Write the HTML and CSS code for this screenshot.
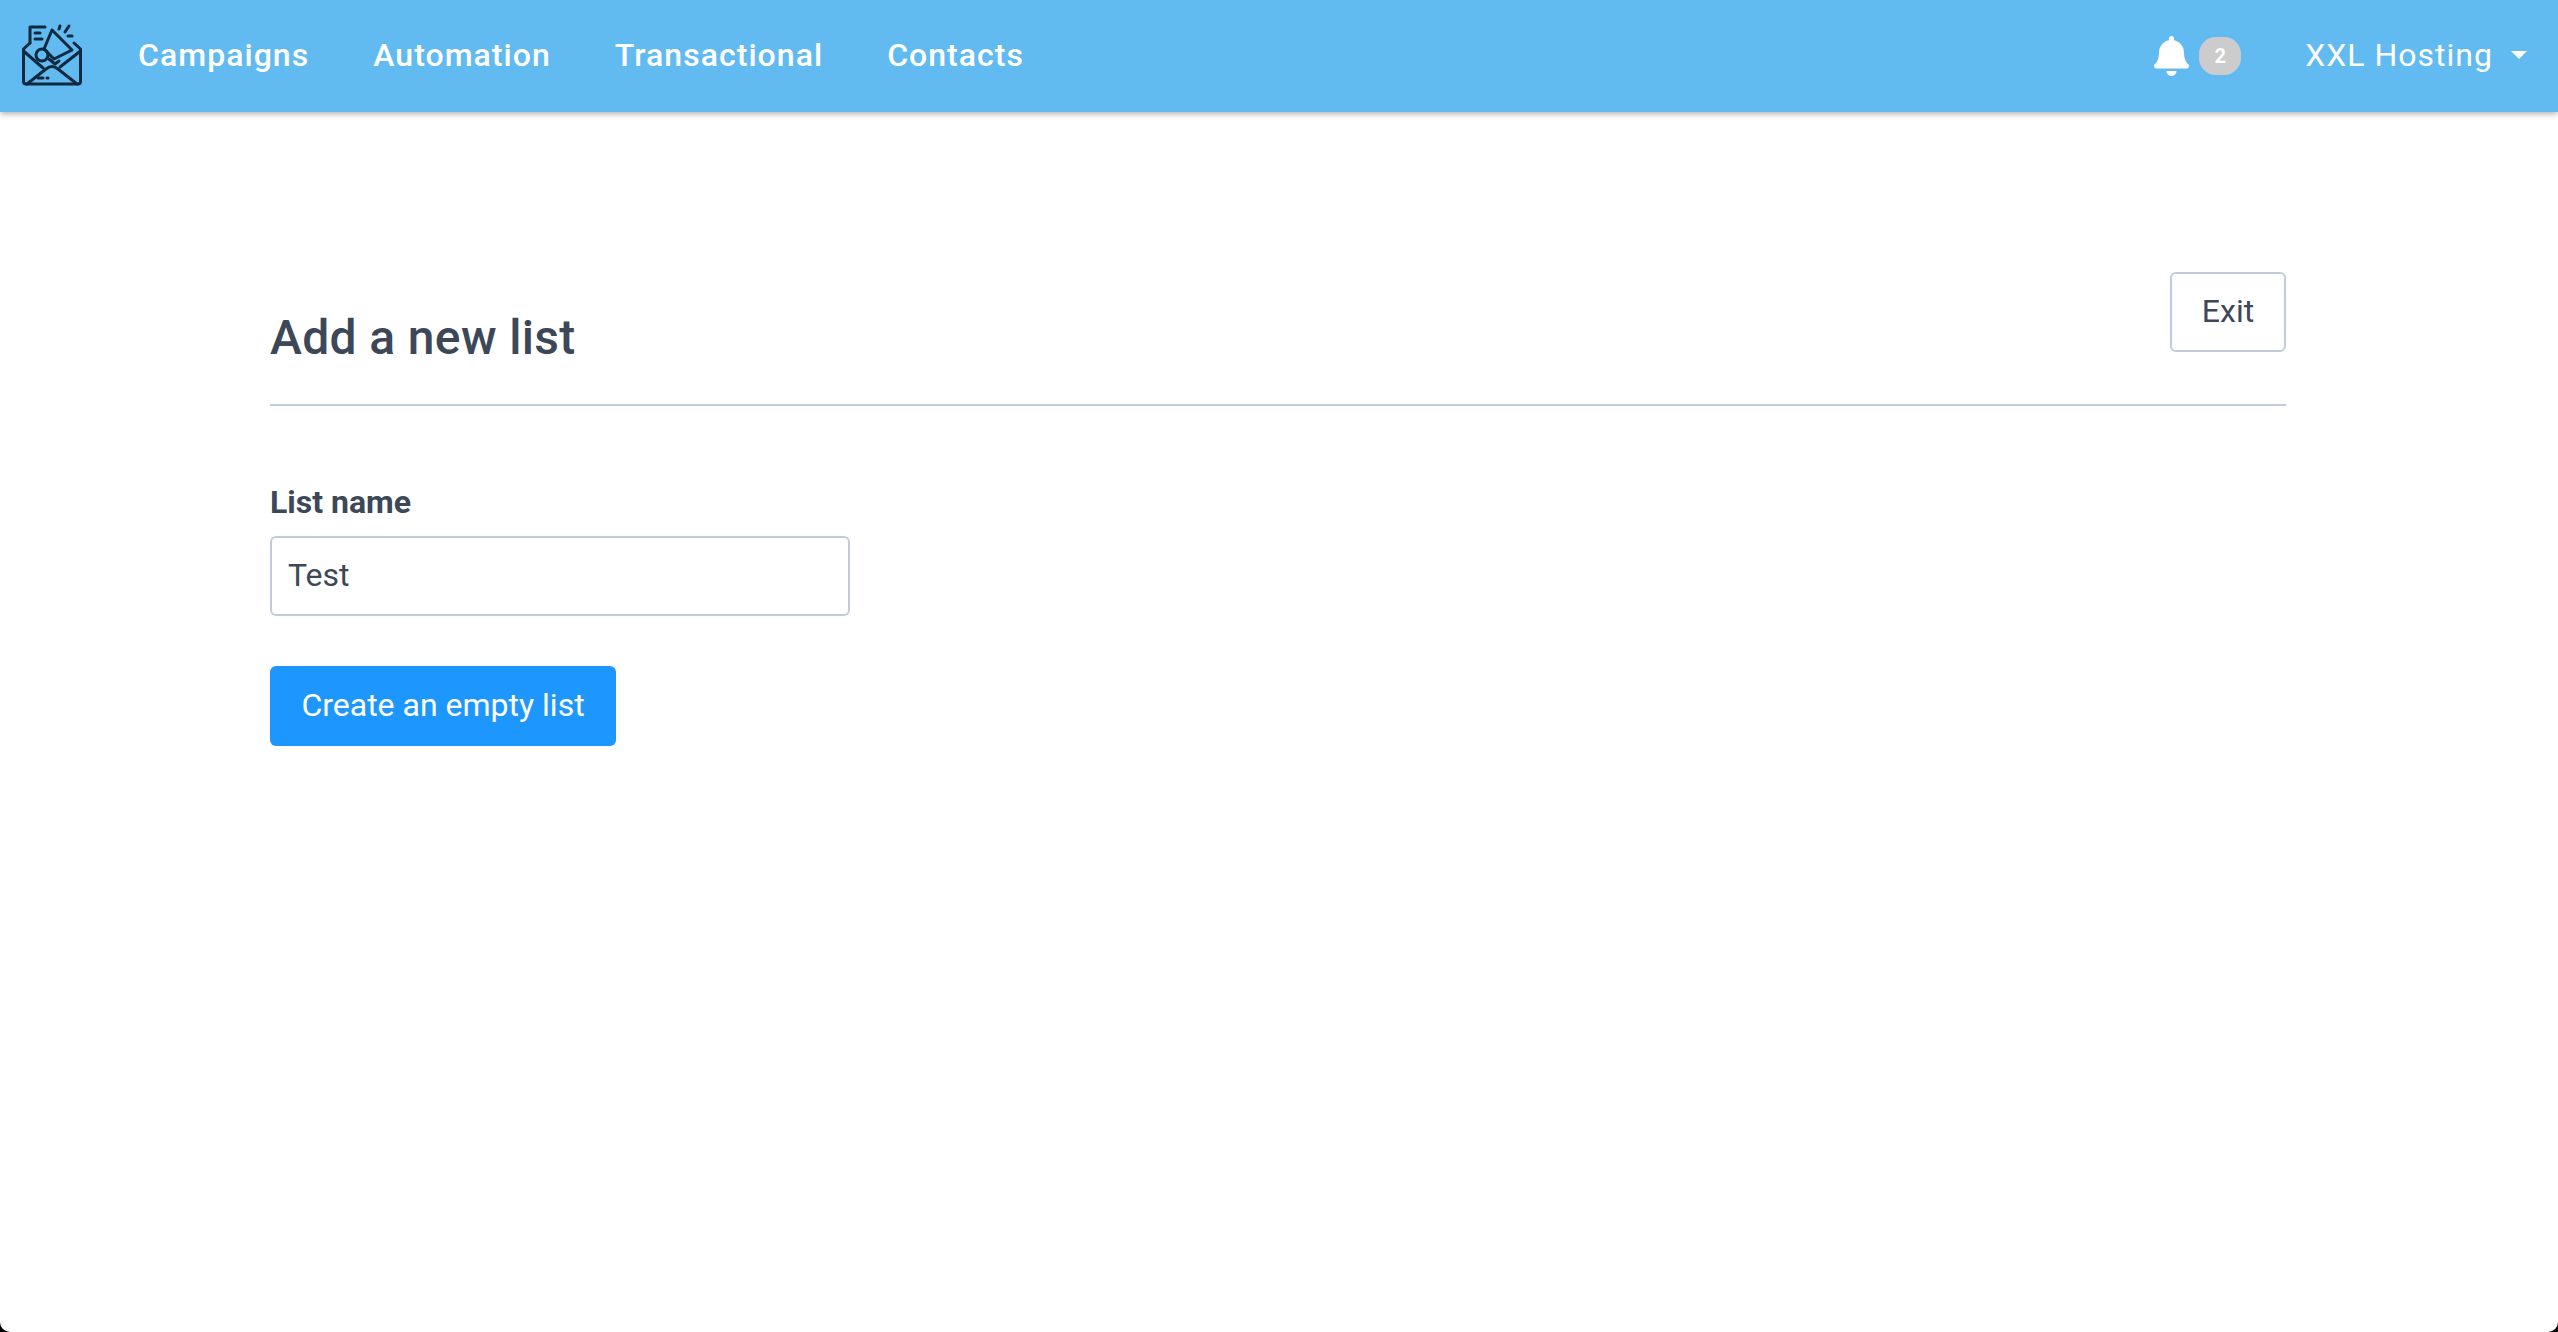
FILE: index.html
```html
<!DOCTYPE html>
<html lang="en">
<head>
<meta charset="utf-8">
<title>Add a new list</title>
<link rel="stylesheet" href="styles.css">
</head>
<body>
<div class="page">
  <nav class="topbar">
    <a class="logo" href="#" aria-label="Home">
      <svg width="60" height="60" viewBox="0 0 60 60" fill="none" stroke="#0f2a40" stroke-width="3" stroke-linejoin="round" stroke-linecap="round">
        <path d="M8 17V1H23"/>
        <path d="M13 7H18M13 13H20"/>
        <path d="M8 17L1.500 23V55.500Q1.500 58 4 58H56Q58.500 58 58.500 55.500V23L52 17"/>
        <path d="M1.500 25L21 42M58.500 25L38 41"/>
        <path d="M5 58L24 43Q30 38 36 43L55 58"/>
        <path d="M30 4L50 24L32 33L22 23Z"/>
        <circle cx="20" cy="29" r="6"/>
        <path d="M27 33L33 38L37 35"/>
        <path d="M38 0L37 3M47 0L43 6M50 10H46M16 52H21M25 52H26"/>
      </svg>
    </a>
    <ul class="menu">
      <li><a href="#">Campaigns</a></li>
      <li><a href="#">Automation</a></li>
      <li><a href="#">Transactional</a></li>
      <li><a href="#">Contacts</a></li>
    </ul>
    <div class="notify">
      <svg class="bell" width="35" height="40" viewBox="0 0 448 512" fill="#fff"><path d="M224 512c35.320 0 63.970-28.650 63.970-64H160.030c0 35.350 28.650 64 63.970 64zm215.390-149.710c-19.320-20.760-55.470-51.990-55.470-154.290 0-77.700-54.480-139.900-127.940-155.160V32c0-17.670-14.320-32-31.980-32s-31.980 14.330-31.980 32v20.840C118.560 68.100 64.080 130.300 64.080 208c0 102.300-36.150 133.530-55.470 154.290-6 6.450-8.660 14.160-8.610 21.710.110 16.400 12.980 32 32.100 32h383.800c19.120 0 32-15.600 32.100-32 .050-7.550-2.610-15.270-8.610-21.710z"/></svg>
      <span class="badge">2</span>
    </div>
    <a class="account" href="#">XXL Hosting<span class="caret"></span></a>
  </nav>

  <main class="content">
    <header class="head">
      <h1 class="title">Add a new list</h1>
      <button class="btn-exit" type="button">Exit</button>
    </header>
    <form class="form">
      <label class="label" for="list-name">List name</label>
      <input class="input" id="list-name" type="text" value="Test">
      <button class="btn-primary" type="button">Create an empty list</button>
    </form>
  </main>
</div>
</body>
</html>
```

FILE: styles.css
```css
* { box-sizing: border-box; }
html, body { margin: 0; height: 100%; background: #000; }
body { font-family: Roboto, "Liberation Sans", sans-serif; color: #3c4858; overflow: hidden; }
.page { height: 1332px; background: #fff; border-radius: 0 0 10px 10px; overflow: hidden; }

.topbar {
  height: 112px; background: #61bbf1; display: flex; align-items: center;
  padding: 0 31px 0 22px; box-shadow: 0 2px 6px rgba(0,0,0,.3); position: relative;
}
.logo { display: block; width: 60px; height: 60px; margin-right: 56px; }
.logo svg { display: block; overflow: visible; }
.menu { display: flex; gap: 64px; list-style: none; margin: 0 0 2px; padding: 0; flex: 1; }
.menu a { color: #fff; text-decoration: none; font-size: 32px; font-weight: 500; letter-spacing: 1.04px; }
.notify { display: flex; align-items: center; gap: 10px; margin-right: 64px; margin-bottom: 1px; }
.bell { display: block; }
.badge {
  width: 42px; height: 38px; border-radius: 17px; background: #ccc; color: #fff;
  font-size: 20px; font-weight: 700; display: flex; align-items: center; justify-content: center;
}
.account { color: #fff; text-decoration: none; font-size: 32px; letter-spacing: 1px; display: flex; align-items: center; padding-bottom: 2px; }
.caret { width: 0; height: 0; margin-left: 18px; border: 8px solid transparent; border-top-color: #fff; border-bottom: 0; }

.content { padding: 160px 272px 0 270px; }
.head { display: flex; justify-content: space-between; align-items: flex-start; height: 134px; border-bottom: 2px solid #c0ccda; }
.title { margin: 38px 0 0; font-size: 48px; line-height: 56px; font-weight: 500; letter-spacing: .35px; }
.btn-exit {
  width: 116px; height: 80px; background: #fff; border: 2px solid #c0ccda; border-radius: 6px; padding: 0 0 2px;
  color: #3c4858; font: 400 32px Roboto, sans-serif;
}
.form { display: flex; flex-direction: column; align-items: flex-start; padding-top: 76px; }
.label { font-size: 32px; line-height: 40px; font-weight: 700; margin-bottom: 14px; }
.input {
  width: 580px; height: 80px; border: 2px solid #c0ccda; border-radius: 6px; padding: 0 16px 3px;
  color: #3c4858; font: 400 32px Roboto, sans-serif; outline: none;
}
.btn-primary {
  width: 346px; height: 80px; margin-top: 50px; background: #1d97fd; border: 0; border-radius: 6px; padding: 0 0 2px;
  color: #fff; font: 400 32px Roboto, sans-serif;
}
```
